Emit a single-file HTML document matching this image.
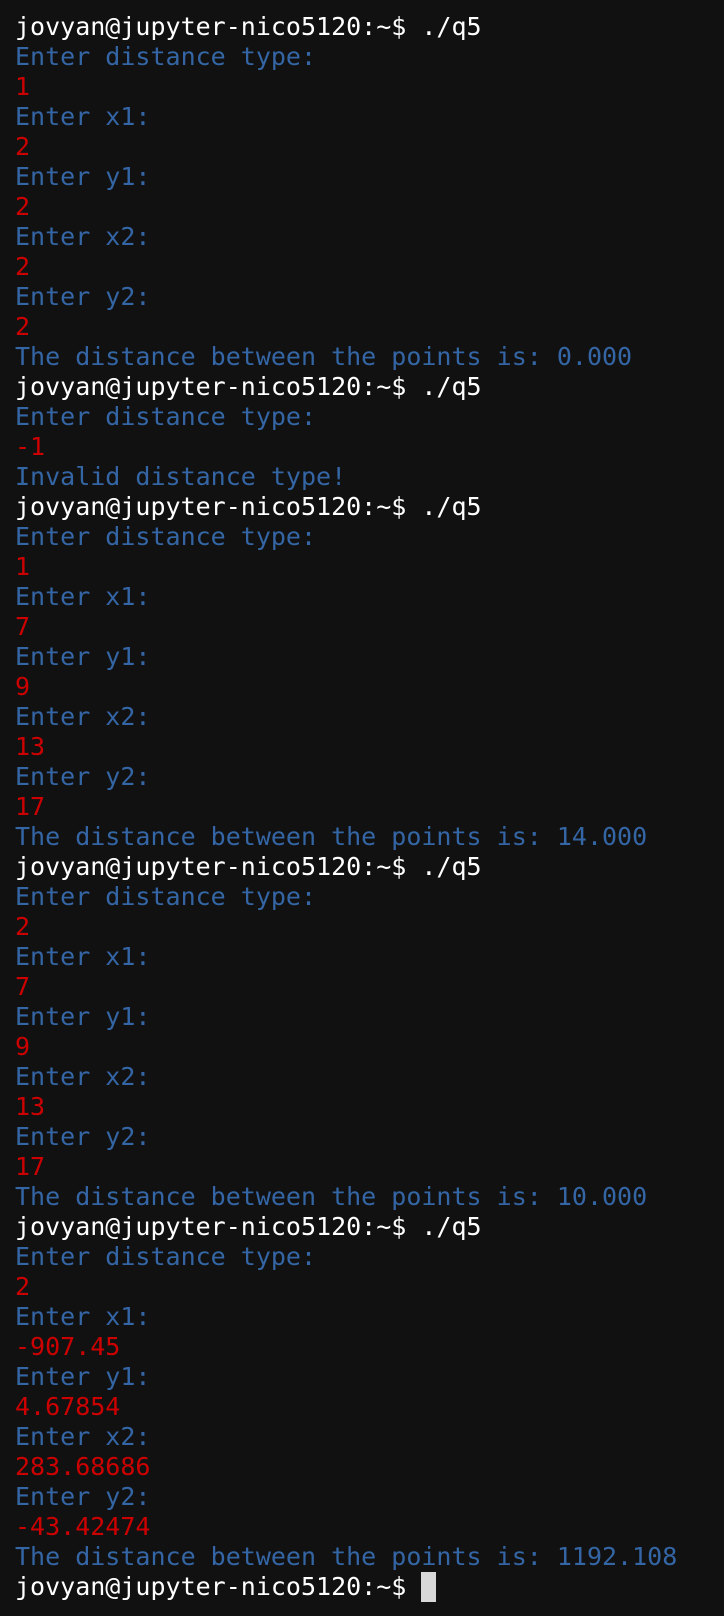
<!DOCTYPE html>
<html><head><meta charset="utf-8"><style>
html,body{margin:0;padding:0;background:#111111;}
body{width:724px;height:1616px;overflow:hidden;}
pre{margin:0;padding:12px 0 0 15px;font-family:"DejaVu Sans Mono","Liberation Mono",monospace;font-size:25px;line-height:30px;color:#3465a4;}
.w{color:#ffffff}.r{color:#cc0000}
.c{display:inline-block;width:15px;height:30px;background:#d8d8d8;vertical-align:top;}
</style></head><body><pre><span class="w">jovyan@jupyter-nico5120:~$ ./q5</span>
Enter distance type:
<span class="r">1</span>
Enter x1:
<span class="r">2</span>
Enter y1:
<span class="r">2</span>
Enter x2:
<span class="r">2</span>
Enter y2:
<span class="r">2</span>
The distance between the points is: 0.000
<span class="w">jovyan@jupyter-nico5120:~$ ./q5</span>
Enter distance type:
<span class="r">-1</span>
Invalid distance type!
<span class="w">jovyan@jupyter-nico5120:~$ ./q5</span>
Enter distance type:
<span class="r">1</span>
Enter x1:
<span class="r">7</span>
Enter y1:
<span class="r">9</span>
Enter x2:
<span class="r">13</span>
Enter y2:
<span class="r">17</span>
The distance between the points is: 14.000
<span class="w">jovyan@jupyter-nico5120:~$ ./q5</span>
Enter distance type:
<span class="r">2</span>
Enter x1:
<span class="r">7</span>
Enter y1:
<span class="r">9</span>
Enter x2:
<span class="r">13</span>
Enter y2:
<span class="r">17</span>
The distance between the points is: 10.000
<span class="w">jovyan@jupyter-nico5120:~$ ./q5</span>
Enter distance type:
<span class="r">2</span>
Enter x1:
<span class="r">-907.45</span>
Enter y1:
<span class="r">4.67854</span>
Enter x2:
<span class="r">283.68686</span>
Enter y2:
<span class="r">-43.42474</span>
The distance between the points is: 1192.108
<span class="w">jovyan@jupyter-nico5120:~$ </span><span class="c"></span></pre></body></html>
